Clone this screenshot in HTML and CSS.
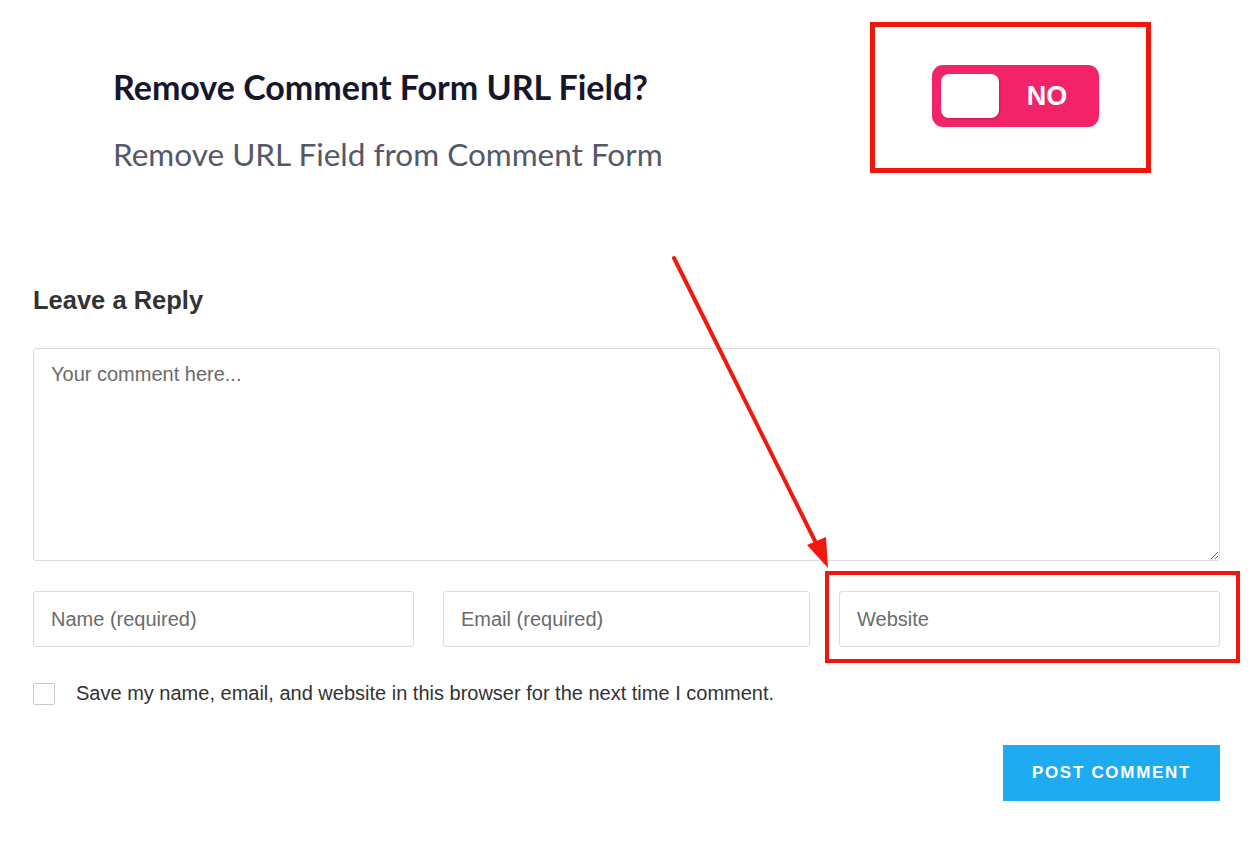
FILE: index.html
```html
<!DOCTYPE html>
<html>

<head>
  <title>Remove Comment Form URL Field</title>
  <link rel="stylesheet" href="styles.css">
</head>

<body>
  <div class="setting">
    <div class="setting-text">
      <h2 class="setting-title">Remove Comment Form URL Field?</h2>
      <p class="setting-desc">Remove URL Field from Comment Form</p>
    </div>
    <div class="highlight-box">
      <div class="toggle">
        <span class="toggle-knob"></span>
        <span class="toggle-label">NO</span>
      </div>
    </div>
  </div>

  <div class="comments">
    <h3 class="reply-title">Leave a Reply</h3>
    <textarea class="comment-box" placeholder="Your comment here..."></textarea>

    <div class="fields">
      <input type="text" class="field" placeholder="Name (required)" />
      <input type="text" class="field" placeholder="Email (required)" />
      <div class="field-wrap">
        <input type="text" class="field" placeholder="Website" />
      </div>
    </div>

    <label class="save-row">
      <span class="checkbox"></span>
      Save my name, email, and website in this browser for the next time I comment.
    </label>

    <div class="submit-row">
      <button class="submit-btn">POST COMMENT</button>
    </div>
  </div>

  <svg class="arrow" width="1256" height="852" viewBox="0 0 1256 852">
    <line x1="674" y1="258" x2="816" y2="543" stroke="#f2180f" stroke-width="4" stroke-linecap="round" />
    <polygon points="807,545 826,537 828,568" fill="#f2180f" />
  </svg>
</body>

</html>
```

FILE: styles.css
```css
body {
  margin: 0;
  background: #fff;
  font-family: "Liberation Sans", Arial, sans-serif;
  position: relative;
  width: 1256px;
  height: 852px;
  overflow: hidden;
}

.setting {
  display: flex;
  align-items: flex-start;
  padding: 22px 0 0 113px;
}

.setting-text {
  width: 757px;
  font-family: Lato, "Noto Sans", sans-serif;
}

.setting-title {
  margin: 44px 0 0;
  font-size: 34px;
  font-weight: 700;
  color: #16172b;
}

.setting-desc {
  margin: 28px 0 0;
  font-size: 31.5px;
  color: #55586a;
}

.highlight-box {
  width: 281px;
  height: 151px;
  box-sizing: border-box;
  border: 5px solid #f2150e;
  display: flex;
  justify-content: center;
  padding-top: 38px;
}

.toggle {
  width: 167px;
  height: 62px;
  box-sizing: border-box;
  background: #f3236a;
  border-radius: 11px;
  display: flex;
  align-items: center;
  padding: 0 9px;
  margin-left: 9px;
}

.toggle-knob {
  width: 58px;
  height: 44px;
  background: #fff;
  border-radius: 8px;
  box-shadow: 1px 1px 2px rgba(120, 0, 40, 0.35);
}

.toggle-label {
  flex: 1;
  text-align: center;
  color: #fff;
  font-family: "Liberation Sans", Arial, sans-serif;
  font-size: 27px;
  font-weight: bold;
  padding-left: 6px;
}

.comments {
  padding: 0 36px 0 33px;
}

.reply-title {
  margin: 113px 0 0;
  font-size: 25.5px;
  font-weight: bold;
  color: #333;
}

.comment-box {
  display: block;
  width: 100%;
  height: 213px;
  margin-top: 33px;
  box-sizing: border-box;
  border: 1px solid #dcdcdc;
  border-radius: 3px;
  padding: 14px 17px;
  font-family: "Liberation Sans", Arial, sans-serif;
  font-size: 20px;
  resize: vertical;
}

.fields {
  display: grid;
  grid-template-columns: 381px 367px 381px;
  gap: 29px;
  margin-top: 30px;
}

.field {
  width: 100%;
  height: 56px;
  box-sizing: border-box;
  border: 1px solid #dcdcdc;
  border-radius: 3px;
  padding: 0 17px;
  font-family: "Liberation Sans", Arial, sans-serif;
  font-size: 20px;
}

.comment-box::placeholder,
.field::placeholder {
  color: #6b6b6b;
}

.field-wrap {
  position: relative;
}

.field-wrap::after {
  content: "";
  position: absolute;
  top: -20px;
  left: -14px;
  right: -20px;
  bottom: -16px;
  border: 4px solid #f2150e;
}

.save-row {
  display: flex;
  align-items: center;
  gap: 21px;
  margin-top: 35px;
  font-size: 20px;
  color: #333;
}

.checkbox {
  width: 20px;
  height: 20px;
  border: 1px solid #c8c8c8;
  border-radius: 2px;
}

.submit-row {
  display: flex;
  justify-content: flex-end;
  margin-top: 40px;
}

.submit-btn {
  width: 217px;
  height: 56px;
  background: #1fabf0;
  color: #fff;
  border: none;
  font-family: "Liberation Sans", Arial, sans-serif;
  font-size: 17px;
  font-weight: bold;
  letter-spacing: 1.7px;
}

.arrow {
  position: absolute;
  left: 0;
  top: 0;
  pointer-events: none;
}
```
